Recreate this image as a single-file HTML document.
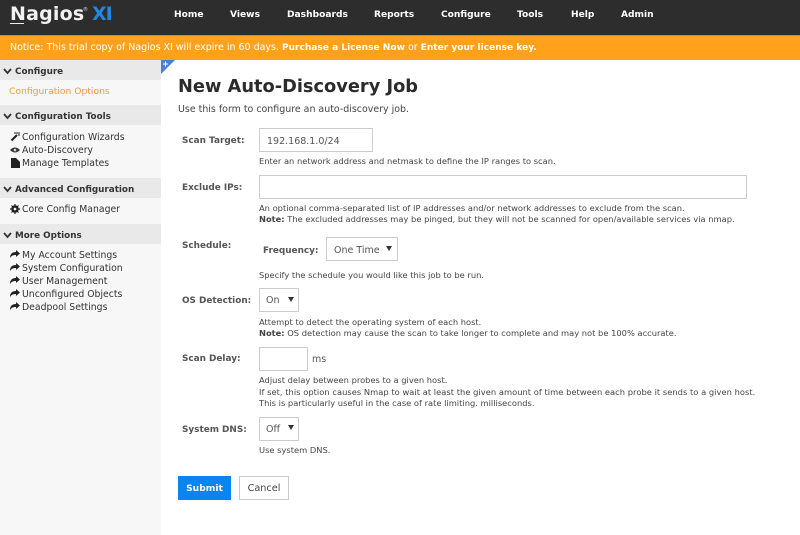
<!DOCTYPE html>
<html><head><meta charset="utf-8"><style>
*{box-sizing:border-box}
html,body{margin:0;padding:0;width:800px;height:535px;overflow:hidden;background:#fff;font-family:"DejaVu Sans",Verdana,sans-serif;color:#444}
.t{position:absolute;white-space:nowrap;line-height:14px}
.nav{font-size:9.1px;font-weight:bold;color:#fff;top:8px}
.sh{position:absolute;left:0;width:161px;height:20px;background:#e9e9e9}
.sht{font-size:8.8px;font-weight:bold;color:#333;left:15px}
.si{font-size:9.3px;color:#333;left:22px}
.lb{font-size:8.9px;font-weight:bold;color:#555;left:182px}
.h{font-size:8.32px;color:#444;left:259px}
.box{position:absolute;border:1px solid #ccc;background:#fff;height:24px}
.v{font-size:9.5px;color:#555}
.ar{position:absolute;width:0;height:0;border-left:3px solid transparent;border-right:3px solid transparent;border-top:5px solid #333}
svg{position:absolute}
</style></head><body>
<div style="position:absolute;left:0;top:0;width:800px;height:35px;background:#2d2d2d"></div>
<div class="t" style="left:10px;top:1px;font-size:19px;line-height:26px;font-weight:bold;color:#f2f2f2;letter-spacing:.2px">Nagios</div>
<div style="position:absolute;left:10px;top:23px;width:14px;height:1px;background:#eee"></div>
<div class="t" style="left:83px;top:7px;font-size:5px;line-height:6px;color:#ddd">®</div>
<div class="t" style="left:92px;top:1px;font-size:19px;line-height:26px;font-weight:bold;color:#1e88e5;letter-spacing:-1px">XI</div>
<div class="t nav" style="left:174px">Home</div>
<div class="t nav" style="left:230px">Views</div>
<div class="t nav" style="left:287px">Dashboards</div>
<div class="t nav" style="left:374px">Reports</div>
<div class="t nav" style="left:441px">Configure</div>
<div class="t nav" style="left:517px">Tools</div>
<div class="t nav" style="left:571px">Help</div>
<div class="t nav" style="left:621px">Admin</div>

<div style="position:absolute;left:0;top:35px;width:800px;height:25px;background:#ffa11a;border-top:1px solid #d98a17"></div>
<div class="t" style="left:10px;top:41px;font-size:9.47px;color:#fff">Notice: This trial copy of Nagios XI will expire in 60 days. <b style="font-size:9.05px">Purchase a License Now</b> or <b style="font-size:9.05px">Enter your license key.</b></div>

<div style="position:absolute;left:0;top:60px;width:161px;height:475px;background:#f7f7f7"></div>
<svg style="left:161px;top:60px" width="14" height="14"><path d="M0 0H14L0 14Z" fill="#4a7fd8"/><path d="M2 4H7M4.500 1.500V6.500" stroke="#fff" stroke-width="1"/></svg>

<div class="sh" style="top:60px"></div>
<svg style="left:3px;top:68px" width="9" height="7"><path d="M1 1L4.500 5L8 1" fill="none" stroke="#333" stroke-width="1.800"/></svg>
<div class="t sht" style="top:65px">Configure</div>
<div class="t" style="left:9px;top:85px;font-size:9.2px;color:#f39a3e">Configuration Options</div>

<div class="sh" style="top:105px"></div>
<svg style="left:3px;top:113px" width="9" height="7"><path d="M1 1L4.500 5L8 1" fill="none" stroke="#333" stroke-width="1.800"/></svg>
<div class="t sht" style="top:110px">Configuration Tools</div>
<svg style="left:10px;top:131px" width="11" height="11"><path d="M1.500 9.500L7 4" stroke="#222" stroke-width="2"/><path d="M4 2H8M9 1V5" stroke="#222" stroke-width="1"/></svg>
<div class="t si" style="top:131px">Configuration Wizards</div>
<svg style="left:10px;top:146px" width="10" height="8"><path d="M0 4Q5 -1 10 4Q5 9 0 4Z" fill="#333"/><circle cx="5" cy="4" r="1.300" fill="#ddd"/></svg>
<div class="t si" style="top:144px">Auto-Discovery</div>
<svg style="left:11px;top:158px" width="9" height="10"><path d="M0 0H5L9 4V10H0Z" fill="#222"/></svg>
<div class="t si" style="top:157px">Manage Templates</div>

<div class="sh" style="top:178px"></div>
<svg style="left:3px;top:186px" width="9" height="7"><path d="M1 1L4.500 5L8 1" fill="none" stroke="#333" stroke-width="1.800"/></svg>
<div class="t sht" style="top:183px">Advanced Configuration</div>
<svg style="left:10px;top:204px" width="10" height="10"><circle cx="5" cy="5" r="2.800" fill="none" stroke="#222" stroke-width="2"/><path d="M5 0V10M0 5H10M1.500 1.500L8.500 8.500M8.500 1.500L1.500 8.500" stroke="#222" stroke-width="1.200"/><circle cx="5" cy="5" r="1.300" fill="#f7f7f7"/></svg>
<div class="t si" style="top:203px">Core Config Manager</div>

<div class="sh" style="top:224px"></div>
<svg style="left:3px;top:232px" width="9" height="7"><path d="M1 1L4.500 5L8 1" fill="none" stroke="#333" stroke-width="1.800"/></svg>
<div class="t sht" style="top:229px">More Options</div>
<svg style="left:10px;top:250px" width="10" height="9"><path d="M6 0L10 3.500L6 7V5Q2 4.500 0 8Q0 2 6 2Z" fill="#222"/></svg>
<div class="t si" style="top:249px">My Account Settings</div>
<svg style="left:10px;top:263px" width="10" height="9"><path d="M6 0L10 3.500L6 7V5Q2 4.500 0 8Q0 2 6 2Z" fill="#222"/></svg>
<div class="t si" style="top:262px">System Configuration</div>
<svg style="left:10px;top:276px" width="10" height="9"><path d="M6 0L10 3.500L6 7V5Q2 4.500 0 8Q0 2 6 2Z" fill="#222"/></svg>
<div class="t si" style="top:275px">User Management</div>
<svg style="left:10px;top:289px" width="10" height="9"><path d="M6 0L10 3.500L6 7V5Q2 4.500 0 8Q0 2 6 2Z" fill="#222"/></svg>
<div class="t si" style="top:288px">Unconfigured Objects</div>
<svg style="left:10px;top:302px" width="10" height="9"><path d="M6 0L10 3.500L6 7V5Q2 4.500 0 8Q0 2 6 2Z" fill="#222"/></svg>
<div class="t si" style="top:301px">Deadpool Settings</div>

<div class="t" style="left:178px;top:76px;font-size:17.8px;line-height:22px;font-weight:bold;color:#2b2b2b">New Auto-Discovery Job</div>
<div class="t" style="left:178px;top:103px;font-size:9.45px;color:#444">Use this form to configure an auto-discovery job.</div>

<div class="t lb" style="top:134px">Scan Target:</div>
<div class="box" style="left:259px;top:128px;width:114px"></div>
<div class="t v" style="left:267px;top:135px">192.168.1.0/24</div>
<div class="t h" style="top:154px">Enter an network address and netmask to define the IP ranges to scan.</div>

<div class="t lb" style="top:181px">Exclude IPs:</div>
<div class="box" style="left:259px;top:175px;width:488px"></div>
<div class="t h" style="top:201px">An optional comma-separated list of IP addresses and/or network addresses to exclude from the scan.</div>
<div class="t h" style="top:212px"><b>Note:</b> The excluded addresses may be pinged, but they will not be scanned for open/available services via nmap.</div>

<div class="t lb" style="top:239px">Schedule:</div>
<div class="t lb" style="left:263px;top:244px">Frequency:</div>
<div class="box" style="left:326px;top:237px;width:72px"></div>
<div class="t v" style="left:334px;top:244px">One Time</div>
<div class="ar" style="left:386px;top:246px"></div>
<div class="t h" style="top:268px">Specify the schedule you would like this job to be run.</div>

<div class="t lb" style="top:294px">OS Detection:</div>
<div class="box" style="left:259px;top:288px;width:40px"></div>
<div class="t v" style="left:266px;top:294px">On</div>
<div class="ar" style="left:288px;top:297px"></div>
<div class="t h" style="top:315px">Attempt to detect the operating system of each host.</div>
<div class="t h" style="top:326px"><b>Note:</b> OS detection may cause the scan to take longer to complete and may not be 100% accurate.</div>

<div class="t lb" style="top:352px">Scan Delay:</div>
<div class="box" style="left:259px;top:347px;width:49px"></div>
<div class="t v" style="left:312px;top:353px">ms</div>
<div class="t h" style="top:373px">Adjust delay between probes to a given host.</div>
<div class="t h" style="top:385px;letter-spacing:.03px">If set, this option causes Nmap to wait at least the given amount of time between each probe it sends to a given host.</div>
<div class="t h" style="top:396px">This is particularly useful in the case of rate limiting. milliseconds.</div>

<div class="t lb" style="top:423px">System DNS:</div>
<div class="box" style="left:259px;top:417px;width:40px"></div>
<div class="t v" style="left:266px;top:423px">Off</div>
<div class="ar" style="left:288px;top:425px"></div>
<div class="t h" style="top:443px">Use system DNS.</div>

<div style="position:absolute;left:178px;top:476px;width:53px;height:24px;background:#0a84f0"></div>
<div class="t" style="left:178px;top:482px;width:53px;text-align:center;font-size:9.2px;font-weight:bold;color:#fff">Submit</div>
<div class="box" style="left:239px;top:476px;width:50px"></div>
<div class="t" style="left:239px;top:482px;width:50px;text-align:center;font-size:9.7px;color:#444">Cancel</div>
</body></html>
